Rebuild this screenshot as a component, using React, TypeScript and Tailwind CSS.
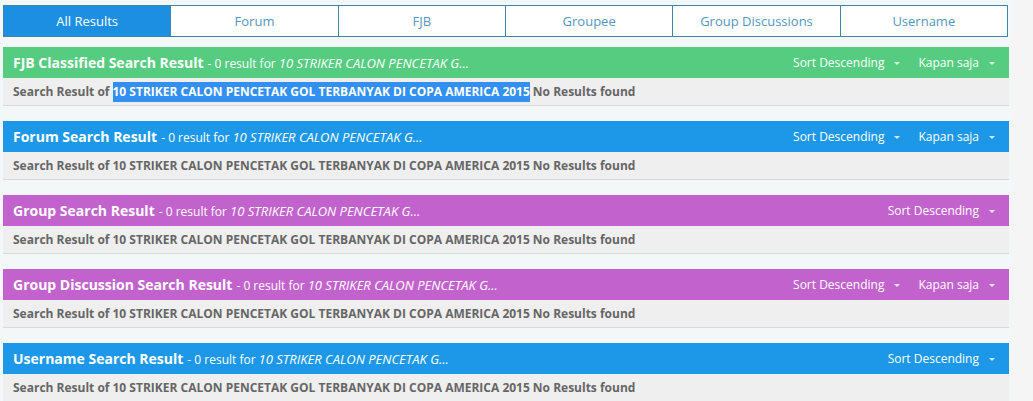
import React from "react";

const QUERY = "10 STRIKER CALON PENCETAK GOL TERBANYAK DI COPA AMERICA 2015";

type Card = {
  title: string;
  bg: string;
  kapan: boolean;
  selected?: boolean;
};

const cards: Card[] = [
  { title: "FJB Classified Search Result", bg: "bg-[#55cc80]", kapan: true, selected: true },
  { title: "Forum Search Result", bg: "bg-[#1d98e8]", kapan: true },
  { title: "Group Search Result", bg: "bg-[#c263cd]", kapan: false },
  { title: "Group Discussion Search Result", bg: "bg-[#c263cd]", kapan: true },
  { title: "Username Search Result", bg: "bg-[#1d98e8]", kapan: false },
];

const tabs = ["All Results", "Forum", "FJB", "Groupee", "Group Discussions", "Username"];

function Caret() {
  return (
    <span className="ml-[10px] inline-block h-0 w-0 border-x-[3px] border-t-[3px] border-x-transparent border-t-white/80 translate-y-[1px]" />
  );
}

export default function App() {
  return (
    <div
      className="flex h-[401px] w-[1033px] overflow-hidden bg-[#f5f5f5]"
      style={{ fontFamily: '"Open Sans", "Liberation Sans", sans-serif' }}
    >
      <div className="w-[1011px] bg-[#f4f7f8] pl-[3px] pr-[2px] pt-[5px]">
        <div className="flex h-[32px] w-[1005px] border border-[#3f85a8] bg-white">
          {tabs.map((t, i) => (
            <div
              key={t}
              className={
                "flex flex-1 items-center justify-center pt-[1px] text-[13px] " +
                (i === 0
                  ? "bg-[#1d8fe3] text-white"
                  : "border-l border-[#3f85a8] text-[#5596c0]")
              }
            >
              {t}
            </div>
          ))}
        </div>
        <div className="mt-[10px] flex w-[1006px] flex-col gap-[15px]">
          {cards.map((c) => (
            <div key={c.title}>
              <div
                className={
                  "flex h-[31px] items-center justify-between pl-[10px] pr-[14px] text-white " +
                  c.bg
                }
              >
                <div className="flex items-baseline whitespace-nowrap">
                  <span className="text-[14px] font-bold">{c.title}</span>
                  <span className="ml-[4px] text-[12px]">- 0 result for</span>
                  <span className="ml-[3px] text-[13px] italic">10 STRIKER CALON PENCETAK G...</span>
                </div>
                <div className="flex items-center text-[12px]">
                  <span className="flex items-center">
                    Sort Descending
                    <Caret />
                  </span>
                  {c.kapan && (
                    <span className="ml-[18px] flex items-center">
                      Kapan saja
                      <Caret />
                    </span>
                  )}
                </div>
              </div>
              <div className="flex h-[28px] items-center whitespace-nowrap border-b border-[#d9d9d9] bg-[#efefef] pl-[10px] text-[12px] font-bold text-[#666666]">
                <span>Search Result of</span>
                {c.selected ? (
                  <span className="ml-[3px] bg-[#3390f0] py-[1px] text-white">{QUERY}</span>
                ) : (
                  <span className="ml-[3px]">{QUERY}</span>
                )}
                <span className="ml-[3px]">No Results found</span>
              </div>
            </div>
          ))}
        </div>
      </div>
    </div>
  );
}
